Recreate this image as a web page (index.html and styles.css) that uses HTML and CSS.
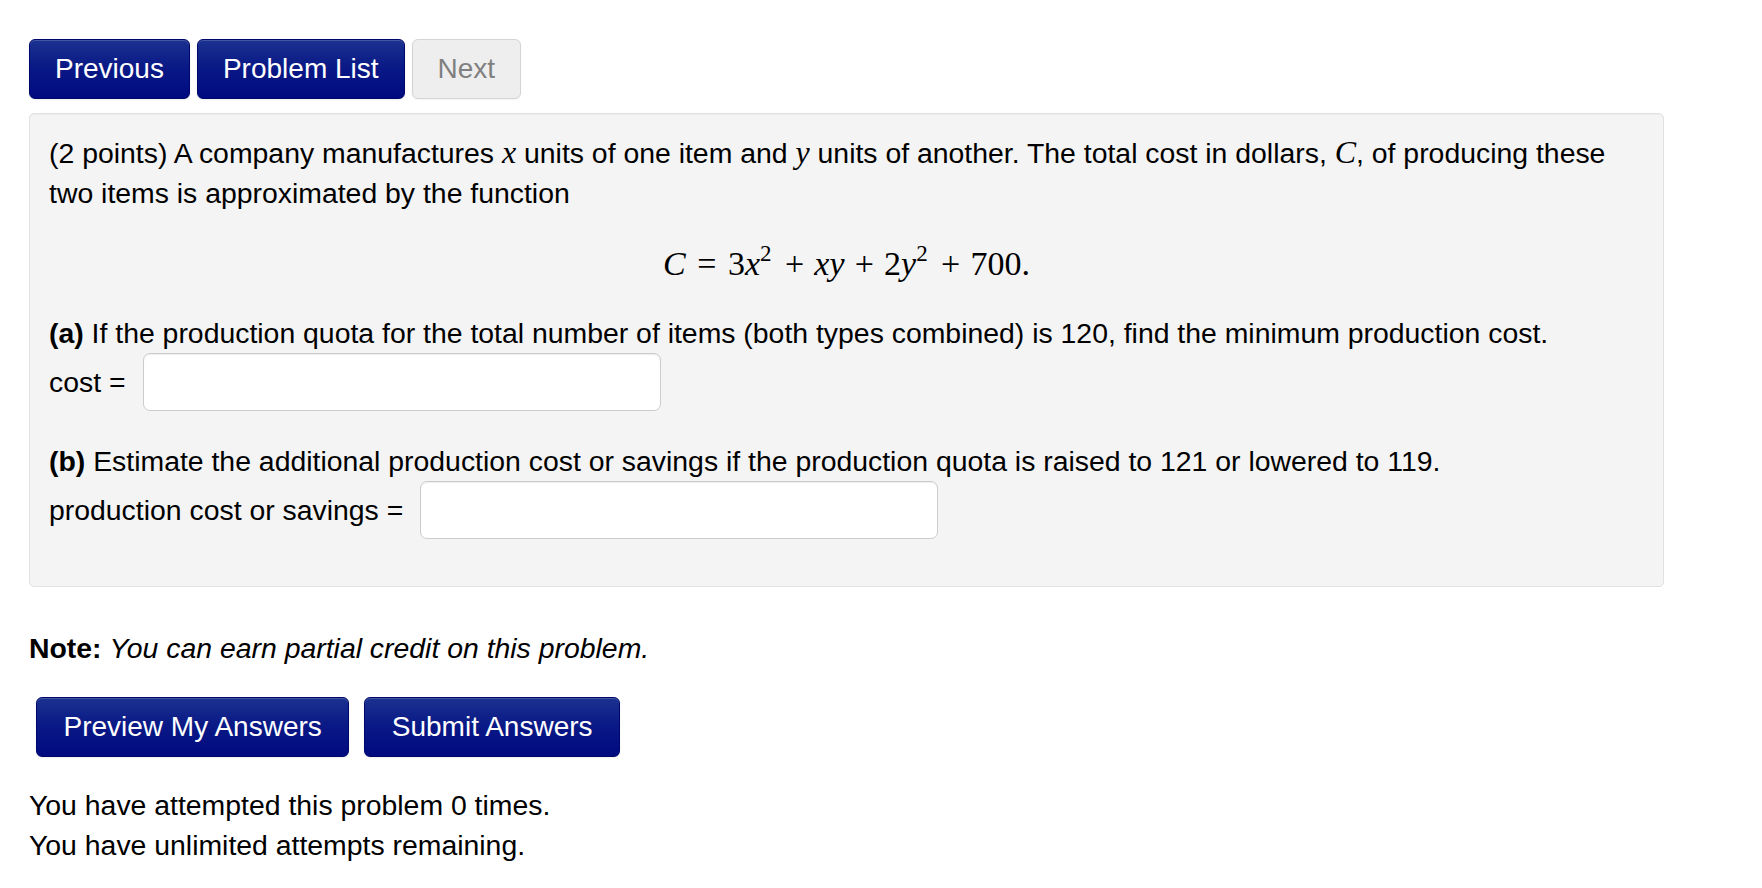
FILE: index.html
```html
<!DOCTYPE html>
<html lang="en">
<head>
<meta charset="utf-8">
<title>Problem</title>
<link rel="stylesheet" href="styles.css">
</head>
<body>
<div class="page">
  <div class="nav">
    <a class="btn btn-primary">Previous</a>
    <a class="btn btn-primary">Problem List</a>
    <a class="btn btn-disabled">Next</a>
  </div>

  <div class="well">
    <p class="intro">(2 points) A company manufactures <span class="mi">x</span> units of one item and <span class="mi">y</span> units of another. The total cost in dollars, <span class="mi">C</span>, of producing these<br>two items is approximated by the function</p>

    <div class="display">
      <span class="mi">C</span><span class="rel">=</span><span class="mn">3</span><span class="mi">x</span><sup class="sup">2</sup><span class="bin">+</span><span class="mi">x</span><span class="mi">y</span><span class="bin">+</span><span class="mn">2</span><span class="mi">y</span><sup class="sup">2</sup><span class="bin">+</span><span class="mn">700.</span>
    </div>

    <p class="part"><b>(a)</b> If the production quota for the total number of items (both types combined) is 120, find the minimum production cost.</p>
    <div class="answer-row">
      <label class="answer-label">cost =</label>
      <input class="answer" type="text">
    </div>

    <p class="part part-b"><b>(b)</b> Estimate the additional production cost or savings if the production quota is raised to 121 or lowered to 119.</p>
    <div class="answer-row last">
      <label class="answer-label">production cost or savings =</label>
      <input class="answer" type="text">
    </div>
  </div>

  <p class="note"><b>Note:</b> <i>You can earn partial credit on this problem.</i></p>

  <div class="submit-row">
    <a class="btn btn-primary">Preview My Answers</a>
    <a class="btn btn-primary">Submit Answers</a>
  </div>

  <p class="attempts">You have attempted this problem 0 times.<br>You have unlimited attempts remaining.</p>
</div>
</body>
</html>
```

FILE: styles.css
```css
html, body {
  margin: 0;
  padding: 0;
  background: #ffffff;
}

body {
  font-family: "Liberation Sans", Arial, Helvetica, sans-serif;
  font-size: 28.4px;
  line-height: 40px;
  color: #000000;
}

.page {
  padding: 39px 0 0 29px;
  width: 1635px;
}

p {
  margin: 0;
}

/* Buttons */
.nav {
  display: flex;
  gap: 7px;
}

.btn {
  display: inline-block;
  box-sizing: border-box;
  height: 60px;
  padding: 0 25px;
  font-size: 28px;
  line-height: 58px;
  border: 1px solid transparent;
  border-radius: 6px;
  text-decoration: none;
  white-space: nowrap;
}

.btn-primary {
  color: #ffffff;
  background: linear-gradient(to bottom, #1b3290 0%, #0a1a86 45%, #000a80 100%);
  border-color: #00076a;
  box-shadow: inset 0 1px 0 rgba(255, 255, 255, 0.18), 0 1px 2px rgba(0, 0, 0, 0.08);
}

.btn-disabled {
  color: #808080;
  background: #eeeeee;
  border-color: #d4d4d4;
  box-shadow: 0 1px 2px rgba(0, 0, 0, 0.05);
}

/* Problem well */
.well {
  box-sizing: border-box;
  width: 1635px;
  margin-top: 14px;
  padding: 19px 19px 19px 19px;
  background: #f4f4f4;
  border: 1px solid #e1e1e1;
  border-radius: 5px;
  box-shadow: inset 0 1px 1px rgba(0, 0, 0, 0.03);
}

.mi {
  font-family: "Liberation Serif", "Times New Roman", serif;
  font-style: italic;
  font-size: 32px;
  line-height: 1;
}

.mn {
  font-family: "Liberation Serif", "Times New Roman", serif;
}

.display {
  margin: 31px 0 29px;
  text-align: center;
  font-family: "Liberation Serif", "Times New Roman", serif;
  font-size: 34px;
  line-height: 40px;
  height: 40px;
}

.display .mi {
  font-size: 34px;
}

.display .rel {
  margin: 0 0.34em;
}

.display .bin {
  margin: 0 0.3em;
}

.display .sup {
  font-size: 23px;
  line-height: 0;
  vertical-align: 14px;
  margin-right: 0.14em;
}

.answer-row {
  display: flex;
  align-items: center;
  gap: 17px;
  height: 58px;
}

.answer-row.last {
  margin-bottom: 28px;
}

.part-b {
  margin-top: 30px;
}

.answer {
  box-sizing: border-box;
  width: 518px;
  height: 58px;
  margin: 0;
  padding: 4px 12px;
  font-family: inherit;
  font-size: 28px;
  background: #ffffff;
  border: 1px solid #cccccc;
  border-radius: 7px;
  box-shadow: inset 0 1px 1px rgba(0, 0, 0, 0.075);
}

/* Footer */
.note {
  margin-top: 41px;
}

.submit-row {
  display: flex;
  gap: 15px;
  margin-top: 29px;
  margin-left: 7px;
}

.submit-row .btn {
  padding: 0 26.5px;
}

.attempts {
  margin-top: 28px;
}
```
